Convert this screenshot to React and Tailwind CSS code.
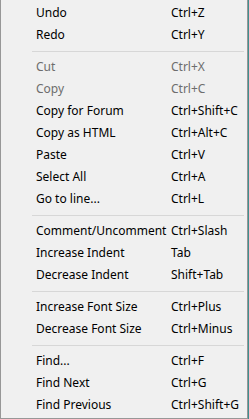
import React from "react";

const MENU = [
  [
    { label: "Undo", keys: "Ctrl+Z" },
    { label: "Redo", keys: "Ctrl+Y" }
  ],
  [
    { label: "Cut", keys: "Ctrl+X", disabled: true },
    { label: "Copy", keys: "Ctrl+C", disabled: true },
    { label: "Copy for Forum", keys: "Ctrl+Shift+C" },
    { label: "Copy as HTML", keys: "Ctrl+Alt+C" },
    { label: "Paste", keys: "Ctrl+V" },
    { label: "Select All", keys: "Ctrl+A" },
    { label: "Go to line...", keys: "Ctrl+L" }
  ],
  [
    { label: "Comment/Uncomment", keys: "Ctrl+Slash" },
    { label: "Increase Indent", keys: "Tab" },
    { label: "Decrease Indent", keys: "Shift+Tab" }
  ],
  [
    { label: "Increase Font Size", keys: "Ctrl+Plus" },
    { label: "Decrease Font Size", keys: "Ctrl+Minus" }
  ],
  [
    { label: "Find...", keys: "Ctrl+F" },
    { label: "Find Next", keys: "Ctrl+G" },
    { label: "Find Previous", keys: "Ctrl+Shift+G" }
  ]
];

function MenuItem({ item }) {
  return (
    <div
      className={
        "flex h-[22px] items-center " +
        (item.disabled ? "text-[#6d6d6d]" : "text-black")
      }
    >
      <span className="w-[170px] shrink-0 pl-[35px] whitespace-nowrap">{item.label}</span>
      <span className="whitespace-nowrap">{item.keys}</span>
    </div>
  );
}

export default function App() {
  return (
    <div className="flex h-[419px] w-[249px] bg-[#3f8f8f]">
      <div
        className="flex h-[419px] w-[248px] flex-col border-b border-l border-r border-[#979797] bg-[#f0f0f0] pt-[2px] text-[12px]"
        style={{ fontFamily: '"Noto Sans", "Open Sans", sans-serif' }}
      >
        {MENU.map((group, i) => (
          <div key={i}>
            {i > 0 && (
              <div className="flex h-[10px] items-center pl-[31px] pr-[3px]">
                <div className="h-px w-full bg-[#d7d7d7]" />
              </div>
            )}
            {group.map((item) => (
              <MenuItem key={item.label} item={item} />
            ))}
          </div>
        ))}
      </div>
    </div>
  );
}
